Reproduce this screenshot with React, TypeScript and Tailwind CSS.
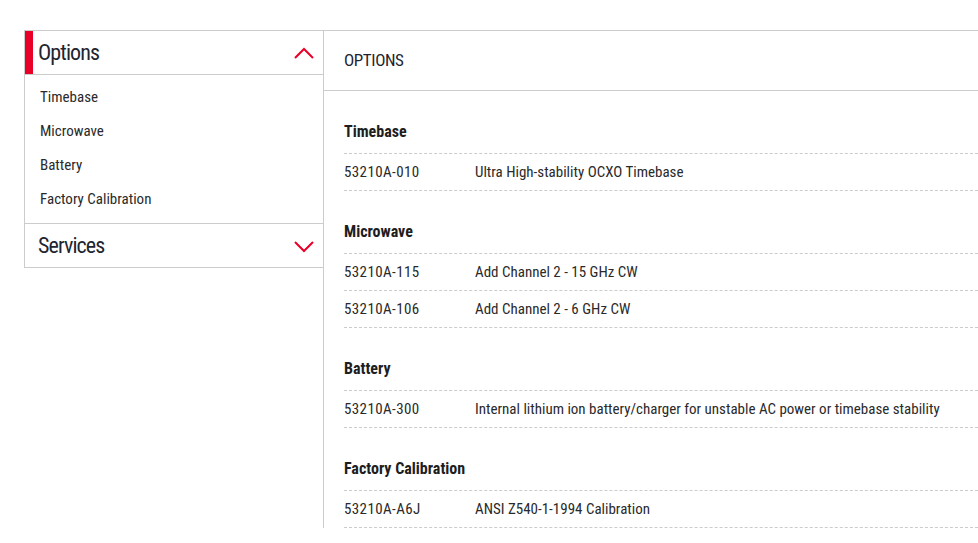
import React from "react";

const sections = [
  { title: "Timebase", rows: [["53210A-010", "Ultra High-stability OCXO Timebase"]] },
  {
    title: "Microwave",
    rows: [
      ["53210A-115", "Add Channel 2 - 15 GHz CW"],
      ["53210A-106", "Add Channel 2 - 6 GHz CW"],
    ],
  },
  {
    title: "Battery",
    rows: [["53210A-300", "Internal lithium ion battery/charger for unstable AC power or timebase stability"]],
  },
  { title: "Factory Calibration", rows: [["53210A-A6J", "ANSI Z540-1-1994 Calibration"]] },
];

function Chevron({ up }: { up?: boolean }) {
  return (
    <svg width="20" height="12" viewBox="0 0 20 12" fill="none" className="shrink-0">
      {up ? (
        <path d="M1 11 L10 2 L19 11" stroke="#e90029" strokeWidth="2" />
      ) : (
        <path d="M1 1 L10 10 L19 1" stroke="#e90029" strokeWidth="2" />
      )}
    </svg>
  );
}

export default function App() {
  return (
    <div
      className="bg-white w-[978px] h-[543px] overflow-hidden pt-[30px] pl-[24px] flex items-start text-[#222] font-stretch-condensed"
      style={{ fontFamily: "Roboto, 'Liberation Sans', sans-serif" }}
    >
      <div className="w-[299px] shrink-0 border-t border-l border-b border-[#cccccc]">
        <div className="h-[44px] flex items-center border-b border-[#cccccc]">
          <div className="w-[8px] self-stretch bg-[#e90029]" />
          <div className="flex-1 pl-[5px] text-[22px] leading-none tracking-[-0.9px] text-[#1e2430]">Options</div>
          <div className="pr-[9px] pt-[1px]">
            <Chevron up />
          </div>
        </div>
        <ul className="pt-[5px] pb-[7px] border-b border-[#cccccc]">
          {["Timebase", "Microwave", "Battery", "Factory Calibration"].map((t) => (
            <li key={t} className="h-[34px] flex items-center pl-[15px] text-[15px] text-[#2a2a2a]">
              {t}
            </li>
          ))}
        </ul>
        <div className="h-[43px] flex items-center">
          <div className="flex-1 pl-[13px] text-[22px] leading-none tracking-[-0.9px] text-[#1e2430]">Services</div>
          <div className="pr-[9px] pt-[2px]">
            <Chevron />
          </div>
        </div>
      </div>
      <div className="flex-1 border-t border-l border-[#cccccc]">
        <div className="h-[60px] flex items-center pl-[20px] border-b border-[#cccccc] text-[17px] tracking-[-0.4px] text-[#1e2430]">
          OPTIONS
        </div>
        {sections.map((s) => (
          <div key={s.title} className="pl-[20px] pt-[28px]">
            <div className="h-[26px] leading-[26px] mb-[8px] text-[16px] font-bold text-[#1e1e1e]">{s.title}</div>
            <div className="border-b border-dashed border-[#cccccc]">
              {s.rows.map(([a, b]) => (
                <div key={a} className="h-[37px] flex items-center border-t border-dashed border-[#cccccc] text-[15px] text-[#2a2a2a] whitespace-nowrap">
                  <div className="w-[131px] shrink-0 tracking-[0.4px]">{a}</div>
                  <div>{b}</div>
                </div>
              ))}
            </div>
          </div>
        ))}
      </div>
    </div>
  );
}
